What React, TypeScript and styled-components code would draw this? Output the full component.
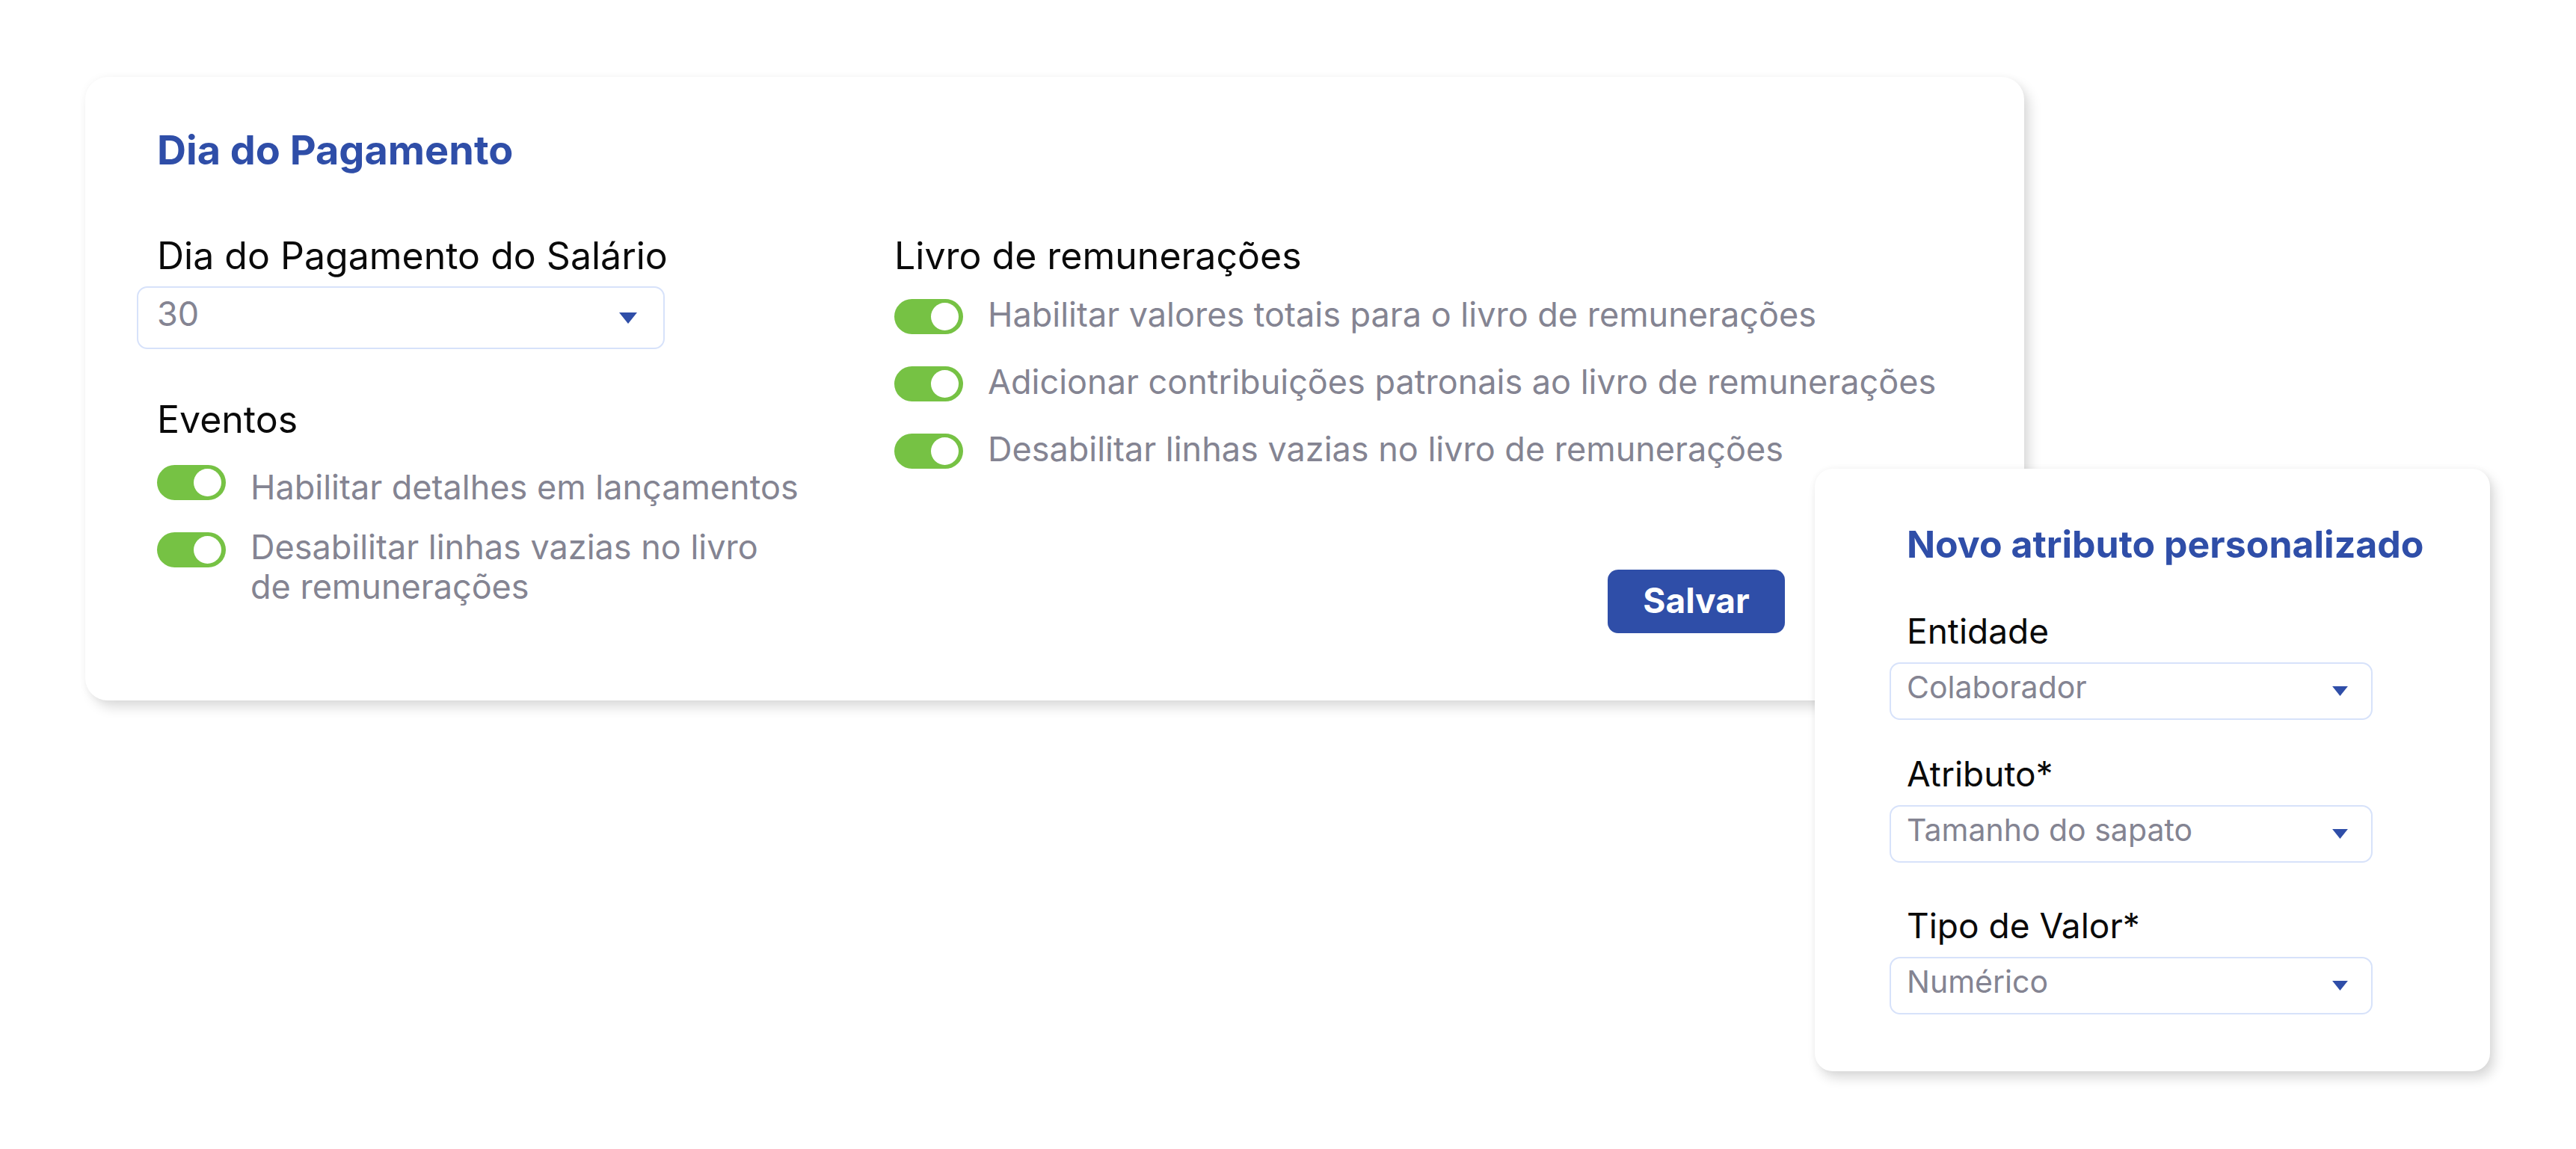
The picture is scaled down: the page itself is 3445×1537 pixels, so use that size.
import React from 'react';
import styled, { createGlobalStyle } from 'styled-components';

const colors = {
    blue: '#2f4ea8',
    green: '#76c244',
    grey: '#848492',
    border: '#d7e2fa',
    black: '#0a0a0a',
};

const GlobalStyle = createGlobalStyle`
    html, body {
        margin: 0;
        padding: 0;
        background: #ffffff;
        font-family: Inter, "Noto Sans", "Liberation Sans", sans-serif;
    }
`;

const Stage = styled.div`
    position: relative;
    min-height: 1537px;
    padding: 103px 0 0 114px;
    box-sizing: border-box;
`;

const Card = styled.section`
    width: 2593px;
    box-sizing: border-box;
    padding: 66px 96px 90px 96px;
    background: #ffffff;
    border-radius: 30px;
    box-shadow: 0 0 12px rgba(0, 0, 0, 0.04), 8px 10px 16px rgba(0, 0, 0, 0.13);
`;

const Title = styled.h2<{ $size: number; $lh: number }>`
    margin: 0;
    font-size: ${p => p.$size}px;
    line-height: ${p => p.$lh}px;
    font-weight: 700;
    color: ${colors.blue};
`;

const Columns = styled.div`
    display: grid;
    grid-template-columns: 986px 1fr;
    margin-top: 80px;
`;

const Column = styled.div`
    display: flex;
    flex-direction: column;
    align-items: flex-start;
`;

const Label = styled.div<{ $size: number; $lh: number; $mt?: number }>`
    font-size: ${p => p.$size}px;
    line-height: ${p => p.$lh}px;
    color: ${colors.black};
    margin-top: ${p => p.$mt || 0}px;
`;

const SelectBox = styled.div<{ $w: number; $h: number; $pad: number; $mt: number }>`
    display: flex;
    align-items: center;
    justify-content: space-between;
    box-sizing: border-box;
    width: ${p => p.$w}px;
    height: ${p => p.$h}px;
    margin-top: ${p => p.$mt}px;
    margin-left: -${p => p.$pad}px;
    padding: 0 ${p => p.$pad + 8}px 0 ${p => p.$pad - 2}px;
    border: 2px solid ${colors.border};
    border-radius: 14px;
    background: #ffffff;
`;

const Value = styled.span<{ $size: number }>`
    font-size: ${p => p.$size}px;
    line-height: ${p => Math.round(p.$size * 1.2)}px;
    color: ${colors.grey};
    padding-bottom: 10px;
`;

const Caret = styled.svg`
    flex: none;
    fill: ${colors.blue};
`;

const ToggleList = styled.div<{ $gap: number; $mt: number }>`
    display: flex;
    flex-direction: column;
    gap: ${p => p.$gap}px;
    margin-top: ${p => p.$mt}px;
`;

const Row = styled.div`
    display: flex;
    align-items: flex-start;
    gap: 33px;
`;

const Toggle = styled.span<{ $offset: number }>`
    position: relative;
    flex: none;
    width: 92px;
    height: 47px;
    margin-top: ${p => p.$offset}px;
    border-radius: 24px;
    background: ${colors.green};

    &::after {
        content: '';
        position: absolute;
        top: 5px;
        right: 6px;
        width: 37px;
        height: 37px;
        border-radius: 50%;
        background: #ffffff;
    }
`;

const RowText = styled.span`
    font-size: 45px;
    line-height: 53px;
    color: ${colors.grey};
    white-space: nowrap;
`;

const SaveButton = styled.button`
    align-self: flex-end;
    margin: 135px 224px 0 0;
    width: 237px;
    height: 85px;
    border: none;
    border-radius: 14px;
    background: ${colors.blue};
    color: #ffffff;
    font-family: inherit;
    font-size: 46px;
    font-weight: 700;
    padding: 0 0 4px;
`;

const AttributeCard = styled.section`
    position: absolute;
    left: 2427px;
    top: 627px;
    width: 903px;
    box-sizing: border-box;
    padding: 71px 0 76px 123px;
    background: #ffffff;
    border-radius: 24px;
    box-shadow: 0 0 10px rgba(0, 0, 0, 0.04), 6px 9px 16px rgba(0, 0, 0, 0.15);
`;

const Field = styled.div<{ $mt: number }>`
    display: flex;
    flex-direction: column;
    align-items: flex-start;
    margin-top: ${p => p.$mt}px;
`;

function Select({ value, w, h, pad, mt, size, caret }: { value: string; w: number; h: number; pad: number; mt: number; size: number; caret: number }) {
    return (
        <SelectBox $w={w} $h={h} $pad={pad} $mt={mt}>
            <Value $size={size}>{value}</Value>
            <Caret width={caret} height={Math.round(caret * 0.64)} viewBox="0 0 24 15">
                <polygon points="0,0 24,0 12,15" />
            </Caret>
        </SelectBox>
    );
}

function ToggleRow({ offset, children }: { offset: number; children: React.ReactNode }) {
    return (
        <Row>
            <Toggle $offset={offset} />
            <RowText>{children}</RowText>
        </Row>
    );
}

export default function App() {
    return (
        <>
            <GlobalStyle />
            <Stage>
                <Card>
                    <Title $size={54} $lh={64}>Dia do Pagamento</Title>
                    <Columns>
                        <Column>
                            <Label $size={50} $lh={58}>Dia do Pagamento do Salário</Label>
                            <Select value="30" w={706} h={84} pad={27} mt={12} size={45} caret={24} />
                            <Label $size={50} $lh={58} $mt={65}>Eventos</Label>
                            <ToggleList $gap={27} $mt={35}>
                                <ToggleRow offset={-3}>Habilitar detalhes em lançamentos</ToggleRow>
                                <ToggleRow offset={7}>
                                    Desabilitar linhas vazias no livro
                                    <br />
                                    de remunerações
                                </ToggleRow>
                            </ToggleList>
                        </Column>
                        <Column>
                            <Label $size={50} $lh={58}>Livro de remunerações</Label>
                            <ToggleList $gap={37} $mt={23}>
                                <ToggleRow offset={6}>Habilitar valores totais para o livro de remunerações</ToggleRow>
                                <ToggleRow offset={6}>Adicionar contribuições patronais ao livro de remunerações</ToggleRow>
                                <ToggleRow offset={6}>Desabilitar linhas vazias no livro de remunerações</ToggleRow>
                            </ToggleList>
                            <SaveButton>Salvar</SaveButton>
                        </Column>
                    </Columns>
                </Card>

                <AttributeCard>
                    <Title $size={50} $lh={60}>Novo atributo personalizado</Title>
                    <Field $mt={60}>
                        <Label $size={46} $lh={53}>Entidade</Label>
                        <Select value="Colaborador" w={646} h={77} pad={23} mt={15} size={41} caret={21} />
                    </Field>
                    <Field $mt={46}>
                        <Label $size={46} $lh={53}>Atributo*</Label>
                        <Select value="Tamanho do sapato" w={646} h={77} pad={23} mt={15} size={41} caret={21} />
                    </Field>
                    <Field $mt={58}>
                        <Label $size={46} $lh={53}>Tipo de Valor*</Label>
                        <Select value="Numérico" w={646} h={77} pad={23} mt={15} size={41} caret={21} />
                    </Field>
                </AttributeCard>
            </Stage>
        </>
    );
}
